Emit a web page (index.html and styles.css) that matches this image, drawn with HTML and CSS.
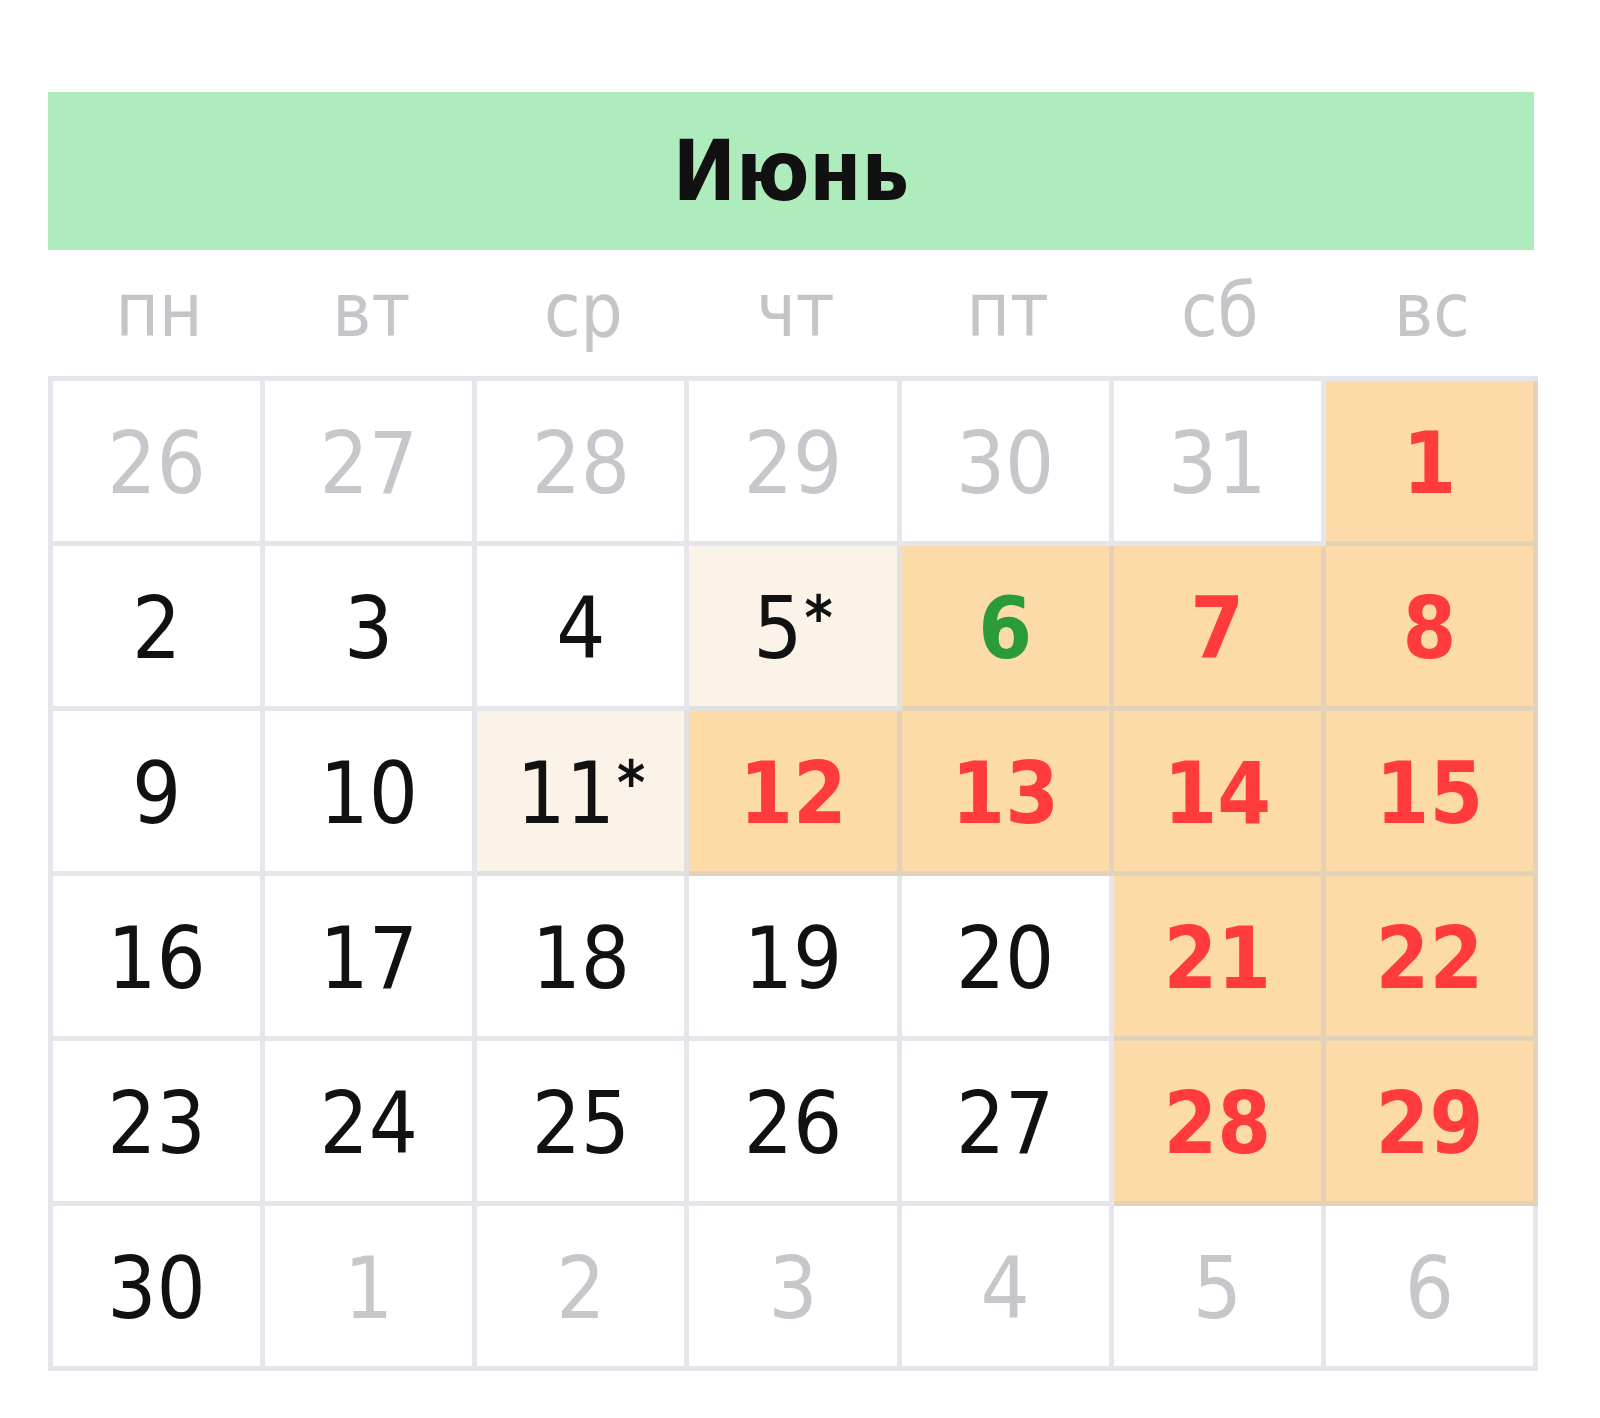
FILE: index.html
```html
<!DOCTYPE html>
<html lang="ru">
<head>
<meta charset="utf-8">
<title>Июнь</title>
<link rel="stylesheet" href="styles.css">
</head>
<body>
<div class="calendar">
  <div class="month">Июнь</div>
  <div class="weekdays">
    <div>пн</div><div>вт</div><div>ср</div><div>чт</div><div>пт</div><div>сб</div><div>вс</div>
  </div>
  <div class="grid">
    <div class="cell other">26</div>
    <div class="cell other">27</div>
    <div class="cell other">28</div>
    <div class="cell other">29</div>
    <div class="cell other">30</div>
    <div class="cell other">31</div>
    <div class="cell holiday">1</div>

    <div class="cell">2</div>
    <div class="cell">3</div>
    <div class="cell">4</div>
    <div class="cell short">5<span class="star">*</span></div>
    <div class="cell holiday green">6</div>
    <div class="cell holiday">7</div>
    <div class="cell holiday">8</div>

    <div class="cell">9</div>
    <div class="cell">10</div>
    <div class="cell short">11<span class="star">*</span></div>
    <div class="cell holiday">12</div>
    <div class="cell holiday">13</div>
    <div class="cell holiday">14</div>
    <div class="cell holiday">15</div>

    <div class="cell">16</div>
    <div class="cell">17</div>
    <div class="cell">18</div>
    <div class="cell">19</div>
    <div class="cell">20</div>
    <div class="cell holiday">21</div>
    <div class="cell holiday">22</div>

    <div class="cell">23</div>
    <div class="cell">24</div>
    <div class="cell">25</div>
    <div class="cell">26</div>
    <div class="cell">27</div>
    <div class="cell holiday">28</div>
    <div class="cell holiday">29</div>

    <div class="cell">30</div>
    <div class="cell other">1</div>
    <div class="cell other">2</div>
    <div class="cell other">3</div>
    <div class="cell other">4</div>
    <div class="cell other">5</div>
    <div class="cell other">6</div>
  </div>
</div>
</body>
</html>
```

FILE: styles.css
```css
html, body {
  margin: 0;
  padding: 0;
  background: #ffffff;
}

body {
  font-family: "DejaVu Sans Condensed", "DejaVu Sans", "Liberation Sans", sans-serif;
  color: #111111;
}

.calendar {
  width: 1490px;
  margin: 92px 0 0 48px;
}

.month {
  width: 1486px;
  height: 158px;
  background: #afecbd;
  display: flex;
  align-items: center;
  justify-content: center;
  font-weight: bold;
  font-size: 84px;
  color: #111111;
}

.weekdays {
  display: grid;
  grid-template-columns: repeat(7, 1fr);
  height: 126px;
  align-items: center;
  padding-left: 5px;
  padding-bottom: 6px;
  box-sizing: border-box;
}

.weekdays div {
  text-align: center;
  font-size: 74px;
  color: #c4c5c9;
}

.grid {
  display: grid;
  grid-template-columns: repeat(7, 1fr);
  grid-auto-rows: 165px;
  border-left: 5px solid #e4e6eb;
  border-top: 5px solid #e4e6eb;
}

.cell {
  display: flex;
  align-items: center;
  justify-content: center;
  border-right: 5px solid rgba(190, 196, 210, 0.42);
  border-bottom: 5px solid rgba(190, 196, 210, 0.42);
  font-size: 86px;
  color: #111111;
  background: #ffffff;
  padding-top: 4px;
}

.star {
  font-size: 60px;
  font-weight: bold;
  align-self: flex-start;
  margin-top: 38px;
  margin-left: 2px;
  line-height: 1;
}

.cell.other {
  color: #c6c7cb;
}

.cell.short {
  background: #fbf3e8;
}

.cell.holiday {
  background: #fddba9;
  color: #ff3b3b;
  font-weight: bold;
}

.cell.holiday.green {
  color: #2a9a3b;
}
```
